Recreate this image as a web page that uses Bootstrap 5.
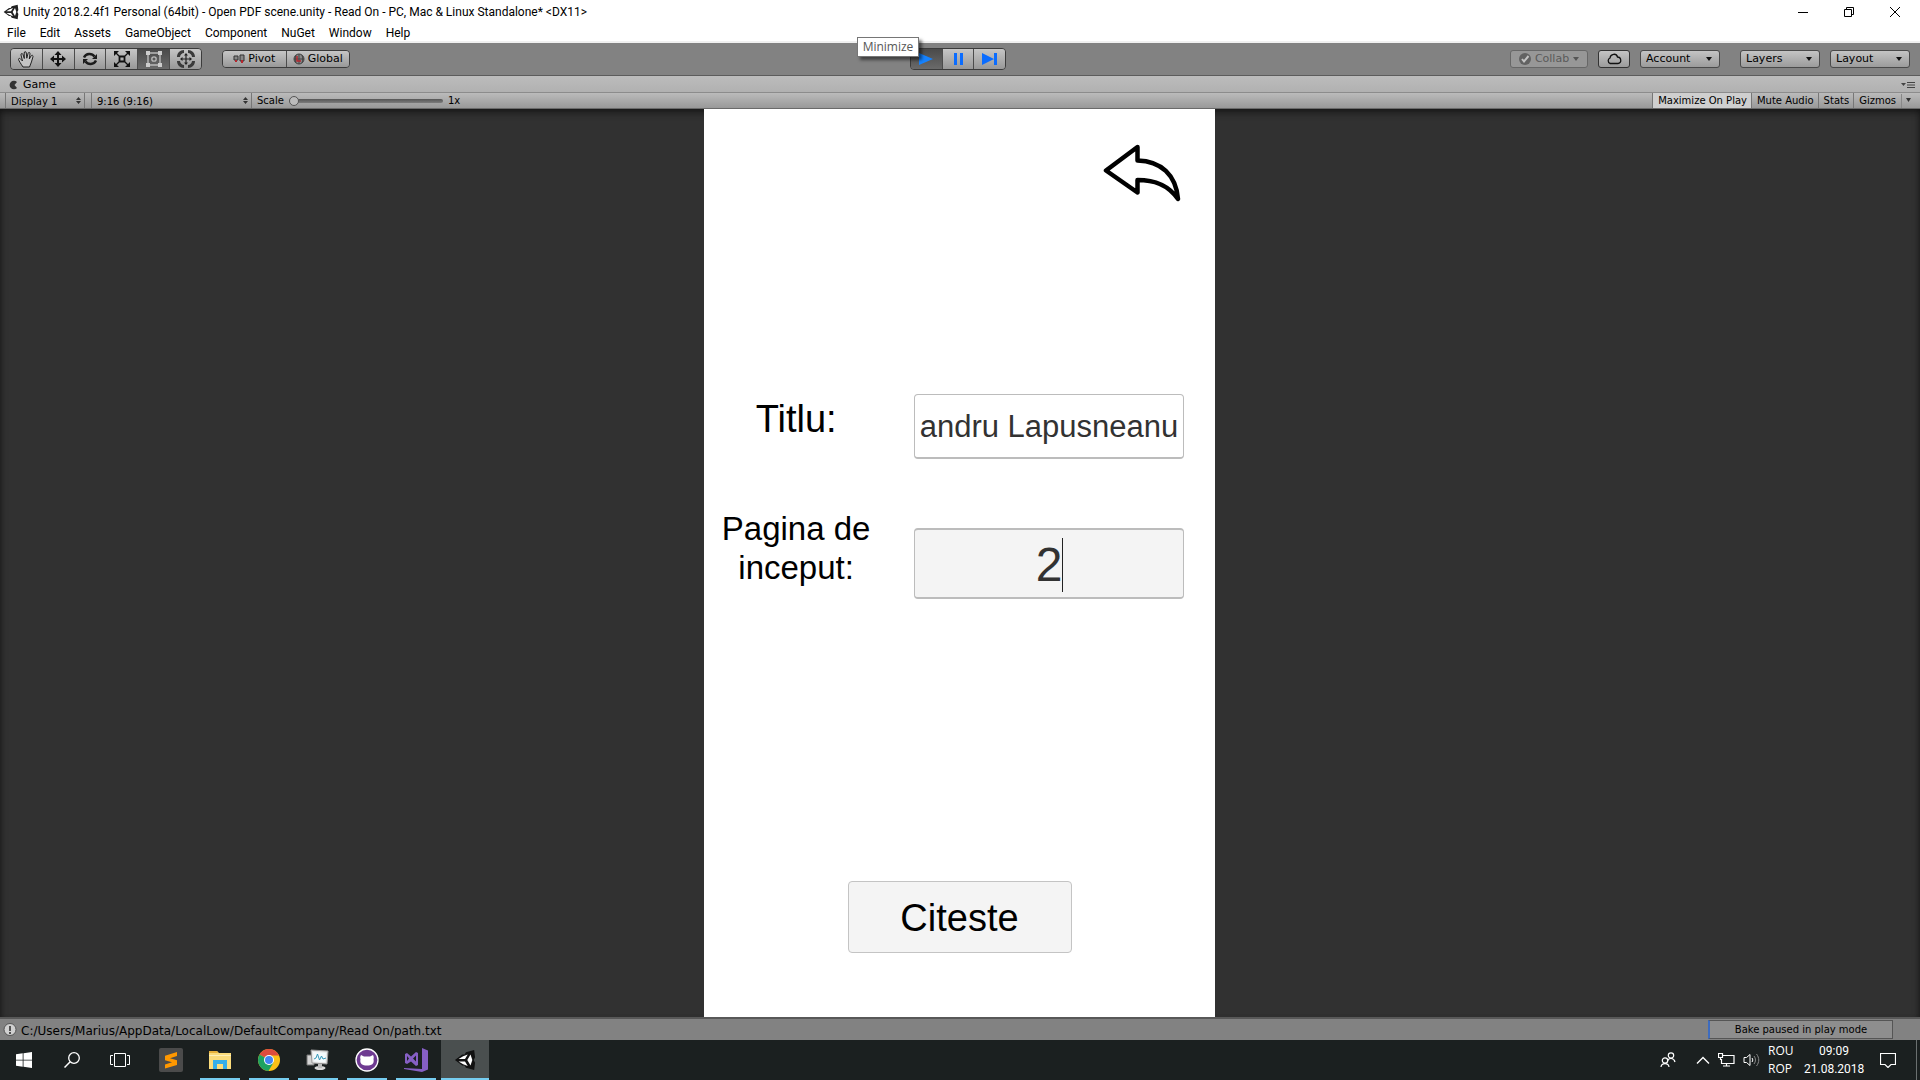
<!DOCTYPE html>
<html lang="en">
<head>
<meta charset="utf-8">
<meta name="viewport" content="width=device-width, initial-scale=1">
<title>Unity 2018.2.4f1 Personal (64bit)</title>
<link href="https://cdn.jsdelivr.net/npm/bootstrap@5.3.0/dist/css/bootstrap.min.css" rel="stylesheet">
<style>
  body { font-family: "DejaVu Sans", sans-serif; font-size: 11px; line-height: 16px; color: #000; background: #828282; }
  button, select, input { font-family: inherit; font-size: inherit; line-height: inherit; color: inherit; }
  svg { display: block; flex: none; }
  .win-font { font-family: "Open Sans", "Noto Sans", sans-serif; font-size: 12px; }
  .title-font { font-family: Roboto, "Open Sans", sans-serif; font-size: 12px; }
  .win-head { background: #fff; height: 43px; border-bottom: 2px solid #f0f0f0; }
  .title-line { height: 22px; padding: 1px 0 0 3px; gap: 4px; }
  .win-ctl { width: 42px; height: 20px; background: none; border: 0; padding: 0; }
  .menu-line { height: 21px; padding-left: 7px; gap: 14px; }
  .menu-line a { color: #000; text-decoration: none; }

  .tool-line { height: 32px; background: #828282; padding: 0 10px; }
  .side { flex: 1 1 0; }
  .seg { border: 1px solid #3c3c3c; border-radius: 4px; overflow: hidden; }
  .seg button { flex: 1 1 0; border: 0; border-right: 1px solid #4c4c4c; background: linear-gradient(#c6c6c6, #989898); padding: 0; height: 20px; }
  .seg button:last-child { border-right: 0; }
  .seg button.pressed { background: linear-gradient(#4a4a4a, #6a6a6a); }
  .seg-tools { width: 192px; margin-right: 20px; }
  .seg-play { width: 96px; }
  .seg-slim { width: 128px; }
  .seg-slim button { height: 16px; gap: 3px; }
  .pop { appearance: none; height: 18px; width: 80px; padding: 0 16px 0 5px; border: 1px solid #4a4a4a; border-radius: 3px; line-height: 16px;
    background: url("data:image/svg+xml,%3Csvg xmlns='http://www.w3.org/2000/svg' width='6' height='4'%3E%3Cpath d='M0 0h6L3 4z' fill='%23111'/%3E%3C/svg%3E") right 7px center no-repeat, linear-gradient(#c4c4c4, #9b9b9b); }
  .layers-pick { margin: 0 10px 0 20px; }
  .tool-btn { height: 18px; border: 1px solid #333; border-radius: 3px; background: linear-gradient(#c4c4c4, #9b9b9b); padding: 0; }
  .tool-btn:disabled { border-color: #676767; background: #979797; color: #5a5a5a; }
  .collab-btn { width: 78px; }
  .cloud-btn { width: 32px; margin: 0 10px; }

  .tab-line { height: 17px; background: linear-gradient(#bcbcbc, #b1b1b1); border-top: 1px solid #5c5c5c; padding: 1px 5px 0 9px; }
  .view-line { height: 17px; background: linear-gradient(#bbb, #999); border-top: 1px solid #8c8c8c; border-bottom: 1px solid #6a6a6a; padding: 0 5px; font-size: 10px; line-height: 15px; }
  .mini { appearance: none; height: 15px; border: 0; border-left: 1px solid #777; border-right: 1px solid #777; border-radius: 0; padding: 1px 12px 0 5px;
    background: url("data:image/svg+xml,%3Csvg xmlns='http://www.w3.org/2000/svg' width='5' height='7'%3E%3Cpath d='M0 3L2.500 0 5 3zM0 4h5L2.500 7z' fill='%23333'/%3E%3C/svg%3E") right 3px center no-repeat; }
  .display-pick { width: 80px; margin-right: 6px; }
  .ratio-pick { width: 161px; }
  .scale-name { margin-left: 5px; }
  .scale-slide { appearance: none; width: 154px; height: 15px; background: none; margin: 0 5px 0 5px; }
  .scale-slide::-webkit-slider-runnable-track { height: 4px; border-radius: 2px; background: linear-gradient(#555, #7c7c7c); }
  .scale-slide::-webkit-slider-thumb { appearance: none; width: 10px; height: 10px; margin-top: -3px; border-radius: 50%; border: 1px solid #555; background: #bbb; }
  .flat { border: 0; border-left: 1px solid #777; background: none; padding: 1px 4px 0 5px; height: 15px; line-height: 14px; }
  .flat.lit { background: #cfcfcf; }
  .gizmo-more { border-left: 1px solid #888; padding-left: 4px; margin-left: 5px; }

  .stage { background: #313131; padding-right: 1px; box-shadow: inset 0 8px 8px -6px #111, inset 6px 0 6px -5px #1c1c1c, inset -6px 0 6px -5px #1c1c1c; }
  .phone { background: #fff; aspect-ratio: 9 / 16; height: calc(100vh - 172px); font-family: "Liberation Sans", Arial, sans-serif; }
  .phone-top { padding: 35px 34px 0 0; }
  .back-btn { border: 0; padding: 0; background: none; }
  .field-row { padding: 0 31px 0 10px; gap: 36px; }
  .field-row label { width: 164px; text-align: center; }
  .title-row { margin-top: 192px; }
  .page-row { margin-top: 50px; }
  .title-label { font-size: 38px; line-height: 50px; }
  .page-label { font-size: 33px; line-height: 39px; }
  .field-box { width: 100%; border: 1px solid #bcbcbc; border-bottom-width: 2px; border-radius: 4px; padding: 1px 0 0; text-align: center; color: #323232; background: #fff; display: block; }
  .title-box { height: 65px; font-size: 31px; }
  .page-wrap { margin-top: 19px; }
  .page-box { height: 71px; font-size: 48px; background: #f4f4f4; border-top-width: 2px; }
  .caret-bar { width: 1px; height: 54px; top: 10px; left: calc(50% + 13px); background: #222; }
  .read-btn { width: 224px; height: 72px; margin-bottom: 64px; padding: 2px 0 0; border: 1px solid #c4c4c4; border-radius: 4px; background: #f4f4f4; font-size: 38px; }

  .status-line { height: 23px; background: #828282; border-top: 2px solid #585858; padding: 0 27px 0 3px; gap: 4px; }
  .status-text { font-size: 12px; padding-top: 3px; }
  .bake { width: 185px; height: 19px; border: 1px solid #555; border-left: 2px solid #3d6cc0; background: #8e8e8e; font-size: 10px; line-height: 17px; text-align: center; }

  .task-line { height: 40px; background: #1b2020; color: #fff; }
  .task-line button { border: 0; padding: 0; background: none; height: 40px; color: #fff; }
  .sys { width: 48px; }
  .app { width: 49px; position: relative; }
  .app-first { width: 48px; margin-left: 3px; }
  .app.running::after { content: ""; position: absolute; left: 5px; right: 4px; bottom: 0; height: 2px; background: #76cdf0; }
  .task-line .current { background: #4a4f4f; width: 48px; margin-left: 1px; }
  .app.current::after { left: 0; right: 0; }
  .tray { gap: 8px; }
  .tray-text { line-height: 18px; }
  .lang { width: 28px; }
  .clock { width: 60px; }
  .people { margin-right: 12px; }
  .notes { margin: 0 12px 0 8px; }
  .peek { height: 40px; width: 4px; border-left: 1px solid #6b7070; }
  .tip { left: calc(50% - 103px); top: 37px; width: 62px; height: 20px; background: #fff; border: 1px solid #767676; color: #575757; text-align: center; line-height: 17px; box-shadow: 3px 3px 3px rgba(0,0,0,.5); z-index: 5; }
</style>
<script src="https://cdn.jsdelivr.net/npm/bootstrap@5.3.0/dist/js/bootstrap.bundle.min.js"></script>
</head>
<body class="d-flex flex-column min-vh-100 overflow-hidden position-relative">

<header class="win-head win-font">
  <div class="title-line d-flex align-items-center">
    <svg width="16" height="16" viewBox="0 0 24 24"><path d="M22 1l-9 2.500-1.500 2.500H9L1 12l8 6h2.500l1.500 2.500 9 2.500 1-8-1.500-3L23 9z" fill="#222"/><path d="M10 8l5-2-3 5h-7zM5 13.500h7l3 5-5-2zM18 6l2 6-2 6-3.500-6z" fill="#fff"/></svg>
    <span class="me-auto title-font">Unity 2018.2.4f1 Personal (64bit) - Open PDF scene.unity - Read On - PC, Mac &amp; Linux Standalone* &lt;DX11&gt;</span>
    <button class="win-ctl d-flex justify-content-center align-items-center" aria-label="Minimize"><svg width="10" height="10"><path d="M0 5.500h10" stroke="#000"/></svg></button>
    <button class="win-ctl d-flex justify-content-center align-items-center" aria-label="Restore"><svg width="10" height="10"><path d="M.5 2.500h7v7h-7zM2.500 2.500v-2h7v7h-2" fill="none" stroke="#000"/></svg></button>
    <button class="win-ctl d-flex justify-content-center align-items-center me-1" aria-label="Close"><svg width="10" height="10"><path d="M0 0l10 10M10 0L0 10" stroke="#000"/></svg></button>
  </div>
  <nav class="menu-line title-font d-flex align-items-center">
    <a href="#">File</a><a href="#">Edit</a><a href="#">Assets</a><a href="#">GameObject</a><a href="#">Component</a><a href="#">NuGet</a><a href="#">Window</a><a href="#">Help</a>
  </nav>
</header>
<div class="tip position-absolute win-font">Minimize</div>

<div class="tool-line d-flex align-items-center">
  <div class="side d-flex align-items-center">
    <div class="seg seg-tools d-flex">
      <button class="d-flex align-items-center justify-content-center" aria-label="Hand"><svg width="18" height="18" viewBox="0 0 18 18"><path d="M6 17C4 14 2 11 1.500 9.500c0-1.500 1.500-1.500 2.500 0L5.500 11 4 5c-.3-1.800 1.500-2 2-.5l1.300 4L7.200 3c0-1.800 2-1.800 2.100 0l.5 5.200L11 3.500c.4-1.600 2.200-1.300 2 .3L12.300 9l1.700-3c.8-1.400 2.400-.6 2 .7C15 10 14 14 12.500 17z" fill="#c4c4c4" stroke="#222"/></svg></button>
      <button class="d-flex align-items-center justify-content-center" aria-label="Move"><svg width="18" height="18" viewBox="0 0 18 18"><path d="M9 1l3.500 4H10v3h3V5.500L17 9l-4 3.500V10h-3v3h2.500L9 17l-3.500-4H8v-3H5v2.500L1 9l4-3.500V8h3V5H5.500z" fill="#111"/></svg></button>
      <button class="d-flex align-items-center justify-content-center" aria-label="Rotate"><svg width="18" height="18" viewBox="0 0 18 18"><path d="M3 7.500C5 3 11 3 13.500 6.500M15 10.500C13 15 7 15 4.500 11.500" fill="none" stroke="#1c1c1c" stroke-width="2.400"/><path d="M16 4v5h-5zM2 14V9h5z" fill="#1c1c1c"/></svg></button>
      <button class="d-flex align-items-center justify-content-center" aria-label="Scale"><svg width="18" height="18" viewBox="0 0 18 18"><path d="M6.500 6.500h5v5h-5z" fill="none" stroke="#111" stroke-width="1.800"/><path d="M2 2l4 4M16 2l-4 4M2 16l4-4M16 16l-4-4" stroke="#111" stroke-width="1.300"/><path d="M1 1h5L1 6zM17 1h-5l5 5zM1 17h5l-5-5zM17 17h-5l5-5z" fill="#111"/></svg></button>
      <button class="pressed d-flex align-items-center justify-content-center" aria-label="Rect"><svg width="18" height="18" viewBox="0 0 18 18"><path d="M3 3h12v12H3z" fill="none" stroke="#bbb" stroke-width="1.400"/><path d="M1 1h4v4H1zM13 1h4v4h-4zM1 13h4v4H1zM13 13h4v4h-4z" fill="#ccc"/><circle cx="9" cy="9" r="2.200" fill="none" stroke="#bbb" stroke-width="1.300"/></svg></button>
      <button class="d-flex align-items-center justify-content-center" aria-label="Transform"><svg width="20" height="18" viewBox="0 0 20 18"><path d="M4 7C4 5 6 3 8 3V0C4 0 1 3 1 7zM16 7c0-2-2-4-4-4V0c4 0 7 3 7 7zM4 11c0 2 2 4 4 4v3c-4 0-7-3-7-7zM16 11c0 2-2 4-4 4v3c4 0 7-3 7-7z" fill="#3a3a3a"/><path d="M10 4v10M5 9h10" stroke="#222" stroke-width="1.200"/><path d="M10 3l2 2.500H8zM10 15l2-2.500H8zM4 9l2.500-2v4zM16 9l-2.500-2v4z" fill="#222"/></svg></button>
    </div>
    <div class="seg seg-slim d-flex">
      <button class="d-flex align-items-center justify-content-center"><svg width="12" height="10"><path d="M1 2h4v4H1zM7 1h4v6H7z" fill="#888" stroke="#333"/><path d="M2 6h2v2H2zM8 6h2v3H8z" fill="#b5262e"/></svg>Pivot</button>
      <button class="d-flex align-items-center justify-content-center"><svg width="12" height="12"><circle cx="6" cy="6" r="5" fill="#888" stroke="#444"/><path d="M1 6h10M6 1v10M3 2c-1 3-1 5 0 8M9 2c1 3 1 5 0 8" stroke="#444" fill="none"/><path d="M4 3v5h4" stroke="#b5262e" stroke-width="1.500" fill="none"/></svg>Global</button>
    </div>
  </div>
  <div class="seg seg-play d-flex me-1">
    <button class="pressed d-flex align-items-center justify-content-center" aria-label="Play"><svg width="16" height="14"><path d="M1 1l14 6-14 6z" fill="#1683ff"/></svg></button>
    <button class="d-flex align-items-center justify-content-center" aria-label="Pause"><svg width="9" height="14"><path d="M0 1h3v12H0zM6 1h3v12H6z" fill="#0a6cff"/></svg></button>
    <button class="d-flex align-items-center justify-content-center" aria-label="Step"><svg width="16" height="14"><path d="M0 1l12 6-12 6zM12 1h3v12h-3z" fill="#0a6cff"/></svg></button>
  </div>
  <div class="side d-flex align-items-center justify-content-end">
    <button class="tool-btn collab-btn d-flex align-items-center justify-content-center gap-1" disabled><svg width="12" height="12"><circle cx="6" cy="6" r="6" fill="#626262"/><path d="M3 6l2 2.500L9.500 3" fill="none" stroke="#c4c4c4" stroke-width="2"/></svg>Collab<svg width="6" height="4"><path d="M0 0h6L3 4z" fill="#555"/></svg></button>
    <button class="tool-btn cloud-btn d-flex align-items-center justify-content-center" aria-label="Cloud"><svg width="16" height="12"><path d="M4 10.500a3 3 0 0 1 0-5.500c.5-4.500 6.500-5 7.500-1 4 0 4.500 6.500.5 6.500z" fill="none" stroke="#111" stroke-width="1.300"/></svg></button>
    <select class="pop" aria-label="Account"><option>Account</option></select>
    <select class="pop layers-pick" aria-label="Layers"><option>Layers</option></select>
    <select class="pop" aria-label="Layout"><option>Layout</option></select>
  </div>
</div>

<div class="tab-line d-flex align-items-center">
  <svg width="10" height="10"><path d="M8 2A4.300 4.300 0 1 0 8 8L5.500 5z" fill="#333"/></svg>
  <span class="ms-1 me-auto">Game</span>
  <svg width="14" height="6" class="align-self-end mb-1"><path d="M0 1h5L2.500 4z" fill="#444"/><path d="M6 .5h8M6 3h8M6 5.500h8" stroke="#444"/></svg>
</div>
<div class="view-line d-flex align-items-center">
  <select class="mini display-pick" aria-label="Display"><option>Display 1</option></select>
  <select class="mini ratio-pick" aria-label="Aspect ratio"><option>9:16 (9:16)</option></select>
  <label for="scale" class="scale-name">Scale</label>
  <input type="range" id="scale" class="scale-slide" min="1" max="5" value="1">
  <span class="me-auto">1x</span>
  <button class="flat lit">Maximize On Play</button>
  <button class="flat">Mute Audio</button>
  <button class="flat">Stats</button>
  <button class="flat d-flex align-items-center">Gizmos<span class="gizmo-more"><svg width="5" height="14"><path d="M0 4h5L2.500 8z" fill="#333"/></svg></span></button>
</div>

<main class="stage flex-grow-1 d-flex justify-content-center">
  <form class="phone d-flex flex-column" onsubmit="return false">
    <div class="phone-top d-flex justify-content-end">
      <button type="button" class="back-btn" aria-label="Back"><svg width="78" height="58" viewBox="0 0 78 58"><path d="M34.500 3L3 26.500l31.500 22V36c16 0 30 4 40.500 19C73 31 58 17 34.500 16.500z" fill="#fff" stroke="#000" stroke-width="4.500" stroke-linejoin="round"/></svg></button>
    </div>
    <div class="field-row title-row d-flex align-items-start">
      <label for="book" class="title-label flex-shrink-0">Titlu:</label>
      <div class="flex-grow-1"><input id="book" class="field-box title-box" type="text" value="andru Lapusneanu"></div>
    </div>
    <div class="field-row page-row d-flex align-items-start">
      <label for="page" class="page-label flex-shrink-0">Pagina de inceput:</label>
      <div class="page-wrap flex-grow-1 position-relative"><input id="page" class="field-box page-box" type="text" value="2"><span class="caret-bar position-absolute"></span></div>
    </div>
    <button class="read-btn mt-auto align-self-center">Citeste</button>
  </form>
</main>

<div class="status-line d-flex align-items-center">
  <svg width="14" height="14"><circle cx="7" cy="6.500" r="6" fill="#d0d0d0" stroke="#555"/><path d="M7 3v5M7 9v2" stroke="#444" stroke-width="1.800"/></svg>
  <span class="status-text me-auto">C:/Users/Marius/AppData/LocalLow/DefaultCompany/Read On/path.txt</span>
  <div class="bake">Bake paused in play mode</div>
</div>

<footer class="task-line win-font d-flex">
  <button class="sys d-flex align-items-center justify-content-center" aria-label="Start"><svg width="16" height="16"><path d="M0 2.300L6.700 1.300v6.400H0zM7.500 1.200L16 0v7.700H7.500zM0 8.500h6.700v6.300L0 13.800zM7.500 8.500H16V16l-8.500-1.200z" fill="#fff"/></svg></button>
  <button class="sys d-flex align-items-center justify-content-center" aria-label="Search"><svg width="16" height="16"><circle cx="10" cy="6" r="5.300" fill="none" stroke="#fff" stroke-width="1.300"/><path d="M6.200 9.800L.5 15.500" stroke="#fff" stroke-width="1.500"/></svg></button>
  <button class="sys d-flex align-items-center justify-content-center" aria-label="Task view"><svg width="20" height="14"><path d="M4.500.5h11v13h-11zM3 2.500H.5v9H3M17 2.500h2.500v9H17" fill="none" stroke="#fff"/></svg></button>
  <button class="app app-first d-flex align-items-center justify-content-center" aria-label="Sublime Text"><svg width="24" height="24"><rect width="24" height="24" rx="2" fill="#4b4b4b"/><path d="M18 4v4l-7 2.300 7 2V17L6 20.500v-4l7-2.300-7-2V7.700z" fill="#ff9800"/></svg></button>
  <button class="app running d-flex align-items-center justify-content-center" aria-label="File Explorer"><svg width="22" height="20"><path d="M0 1h8l2 2h12v16H0z" fill="#fbdc7b"/><path d="M0 1h8l1 2H0z" fill="#e8b13a"/><path d="M0 5h22v1H0z" fill="#fff0b8"/><path d="M4 19v-9h14v9h-4v-5H8v5z" fill="#35aee8"/></svg></button>
  <button class="app running d-flex align-items-center justify-content-center" aria-label="Chrome"><svg width="22" height="22"><circle cx="11" cy="11" r="11" fill="#fbc116"/><path d="M11 11L1.500 5.500A11 11 0 0 1 20.500 5.500L21 6.500H11z" fill="#dd4b3e"/><path d="M11 11L1.500 5.500A11 11 0 0 0 10.500 22l5-8.500z" fill="#1da261"/><circle cx="11" cy="11" r="5" fill="#fff"/><circle cx="11" cy="11" r="4" fill="#4285f4"/></svg></button>
  <button class="app running d-flex align-items-center justify-content-center" aria-label="Resource Monitor"><svg width="24" height="22"><path d="M1 6h7v10H1z" fill="#d4d4d4" stroke="#777"/><path d="M5 1l17 1-1 13-15-1z" fill="#e8e8e8" stroke="#999"/><path d="M7 3l13 .7-.7 9.600L8 12.500z" fill="#f4fafc"/><path d="M8 10l2-1 1.500-4 2 6 2-4 1.500 3 3-1" fill="none" stroke="#3597b8"/><ellipse cx="14" cy="19" rx="5.500" ry="2" fill="#d8d8d8"/><path d="M12 15h4v4h-4z" fill="#bbb"/></svg></button>
  <button class="app running d-flex align-items-center justify-content-center" aria-label="GitHub Desktop"><svg width="24" height="24"><circle cx="12" cy="12" r="11" fill="#6e3a91" stroke="#fff" stroke-width="1.300"/><path d="M6 7l3 1.500h6L18 7c1 2 .8 3 .5 4 1 5-2 6.500-6.500 6.500S4.500 16 5.500 11C5 10 5 9 6 7z" fill="#fff"/></svg></button>
  <button class="app running d-flex align-items-center justify-content-center" aria-label="Visual Studio"><svg width="24" height="24"><path d="M18 0l6 2.500v19L18 24 0 21v-1l18 1z" fill="#865fc5"/><path d="M1 6l2-1 4 3.500L12 4l2 1v12l-2 1-5-4.500L3 16l-2-1zm2 2v5L5 10.500zM12 7.500l-3 3 3 3z" fill="#865fc5" fill-rule="evenodd"/></svg></button>
  <button class="app running current d-flex align-items-center justify-content-center" aria-label="Unity"><svg width="22" height="22" viewBox="0 0 24 24"><path d="M22 1l-9 2.500-1.500 2.500H9L1 12l8 6h2.500l1.500 2.500 9 2.500 1-8-1.500-3L23 9z" fill="#111"/><path d="M10 8l5-2-3 5h-7zM5 13.500h7l3 5-5-2zM18 6l2 6-2 6-3.500-6z" fill="#fff"/></svg></button>
  <div class="tray ms-auto d-flex align-items-center">
    <svg class="people" width="16" height="16"><g fill="none" stroke="#fff" stroke-width="1.200"><circle cx="11" cy="3.500" r="2.700"/><path d="M7.500 9c1-3.500 6.500-3.500 7.500 1"/><circle cx="5" cy="8.500" r="2.700"/><path d="M1 15c.5-4.500 7.500-4.500 8 0"/></g></svg>
    <svg width="14" height="8"><path d="M1 7.500l6-6 6 6" fill="none" stroke="#fff" stroke-width="1.400"/></svg>
    <svg width="17" height="14"><path d="M5 2.500h11v8H3.500V6M5 13h7M8.500 11v2M.5.5h4v4h-4zM2.500 4v3" fill="none" stroke="#fff" stroke-width="1.200"/></svg>
    <svg width="17" height="14"><path d="M1 4.500h2.500L7 1.500v11L3.500 9.500H1z" fill="none" stroke="#fff"/><path d="M9 5c1 1.500 1 2.500 0 4" fill="none" stroke="#fff"/><path d="M11 3c2 2.500 2 5.500 0 8M13.500 1c3 4 3 8 0 12" fill="none" stroke="#888"/></svg>
    <div class="tray-text lang">ROU<br>ROP</div>
    <div class="tray-text clock title-font text-center">09:09<br>21.08.2018</div>
    <svg class="notes" width="16" height="16"><path d="M.5 1.500h15v11H11L8 15.500l-3-3H.5z" fill="none" stroke="#fff" stroke-width="1.200"/></svg>
    <div class="peek"></div>
  </div>
</footer>
</body>
</html>
